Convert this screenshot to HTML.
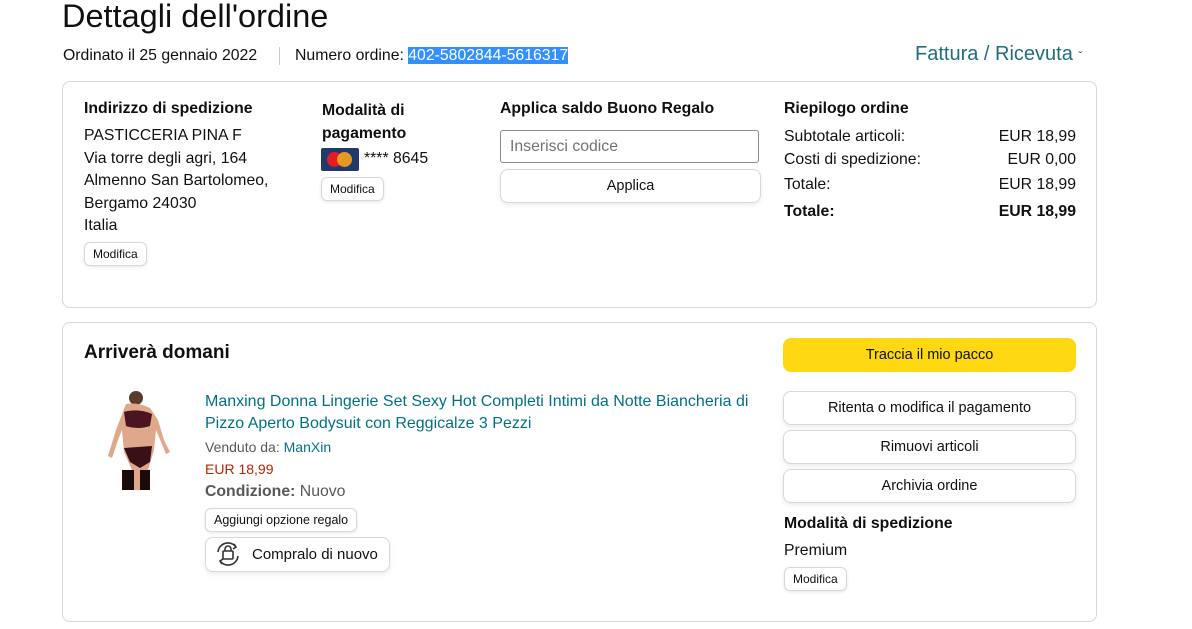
<!DOCTYPE html>
<html><head><meta charset="utf-8"><style>
*{margin:0;padding:0;box-sizing:border-box}
body{width:1192px;height:629px;background:#fff;font-family:"Liberation Sans",Arial,sans-serif;color:#0f1111;position:relative;overflow:hidden;font-size:15.8px}
.a{position:absolute;white-space:nowrap}
.b{font-weight:bold}
.box{position:absolute;border:1px solid #d5d9d9;border-radius:8px}
.btn{position:absolute;border:1px solid #d5d9d9;border-radius:8px;background:#fff;box-shadow:0 2px 5px rgba(213,217,217,.5);text-align:center;font-size:14.5px}
.sm{position:absolute;border:1px solid #d5d9d9;border-radius:6px;background:#fff;box-shadow:0 1px 3px rgba(213,217,217,.6);font-size:12px;padding:0 8px;line-height:22px;height:24px}
.link{color:#007185}
</style></head><body>
<div class="a" style="left:62px;top:-4px;font-size:32.5px;line-height:40px">Dettagli dell'ordine</div>
<div class="a" style="left:63px;top:46px;line-height:20px">Ordinato il 25 gennaio 2022</div>
<div class="a" style="left:279px;top:47px;width:1px;height:18px;background:#ccc"></div>
<div class="a" style="left:295px;top:46px;line-height:20px">Numero ordine: <span style="background:#3390ff;color:#fff">402-5802844-5616317</span></div>
<div class="a link" style="left:915px;top:42px;font-size:20px;line-height:24px;color:#1e6e7e">Fattura / Ricevuta <span style="font-size:12px;color:#555">&#711;</span></div>

<div class="box" style="left:62px;top:81px;width:1035px;height:227px"></div>
<div class="a b" style="left:84px;top:99px;line-height:20px">Indirizzo di spedizione</div>
<div class="a" style="left:84px;top:125px;line-height:22.5px">PASTICCERIA PINA F<br>Via torre degli agri, 164<br>Almenno San Bartolomeo,<br>Bergamo 24030<br>Italia</div>
<div class="sm" style="left:84px;top:242px">Modifica</div>

<div class="a b" style="left:322px;top:99px;line-height:23px">Modalità di<br>pagamento</div>
<div class="a" style="left:321px;top:148px;width:38px;height:23px;background:#1f3a6b;border-radius:2px"><div style="position:absolute;left:6px;top:4px;width:15px;height:15px;border-radius:50%;background:#e51c23"></div><div style="position:absolute;left:16px;top:4px;width:15px;height:15px;border-radius:50%;background:#f8a51b;opacity:.9"></div></div>
<div class="a" style="left:364px;top:149px;line-height:20px">**** 8645</div>
<div class="sm" style="left:321px;top:177px">Modifica</div>

<div class="a b" style="left:500px;top:99px;line-height:20px">Applica saldo Buono Regalo</div>
<div class="a" style="left:500px;top:130px;width:259px;height:33px;border:1px solid #888c8c;border-radius:3px;color:#6f7373;padding-left:9px;line-height:31px">Inserisci codice</div>
<div class="btn" style="left:500px;top:169px;width:261px;height:34px;line-height:32px">Applica</div>

<div class="a b" style="left:784px;top:99px;line-height:20px">Riepilogo ordine</div>
<div class="a" style="left:784px;top:125px;line-height:23px">Subtotale articoli:<br>Costi di spedizione:</div>
<div class="a" style="right:116px;top:125px;line-height:23px;text-align:right">EUR 18,99<br>EUR 0,00</div>
<div class="a" style="left:784px;top:175px;line-height:20px">Totale:</div>
<div class="a" style="right:116px;top:175px;line-height:20px">EUR 18,99</div>
<div class="a b" style="left:784px;top:202px;line-height:20px">Totale:</div>
<div class="a b" style="right:116px;top:202px;line-height:20px">EUR 18,99</div>

<div class="box" style="left:62px;top:322px;width:1035px;height:300px"></div>
<div class="a b" style="left:84px;top:341px;font-size:19px;line-height:24px">Arriverà domani</div>
<svg class="a" style="left:104px;top:390px" width="74" height="102" viewBox="0 0 74 102">
<circle cx="32" cy="8" r="7" fill="#5a3a2a"/>
<path d="M22 14 Q34 12 46 18 L54 30 L60 50 L66 62 L62 64 L52 40 L50 60 L44 80 L42 100 L30 100 L28 80 L20 62 L18 40 L14 50 L8 68 L4 66 L12 40 Z" fill="#e0a88a"/>
<path d="M20 22 Q34 18 48 24 L46 36 Q34 40 22 36 Z" fill="#4a1420"/>
<path d="M20 58 L48 56 L46 72 L36 78 L26 72 Z" fill="#3a1018"/>
<path d="M18 80 L30 80 L30 100 L18 100 Z M36 80 L46 80 L46 100 L36 100 Z" fill="#1a0a0a"/>
</svg>
<div class="a link" style="left:205px;top:391px;line-height:22px;font-size:16px">Manxing Donna Lingerie Set Sexy Hot Completi Intimi da Notte Biancheria di<br>Pizzo Aperto Bodysuit con Reggicalze 3 Pezzi</div>
<div class="a" style="left:205px;top:438px;font-size:14px;line-height:18px;color:#565959">Venduto da: <span class="link">ManXin</span></div>
<div class="a" style="left:205px;top:460px;font-size:14px;line-height:18px;color:#b12704">EUR 18,99</div>
<div class="a" style="left:205px;top:482px;line-height:20px;color:#565959"><b>Condizione:</b> Nuovo</div>
<div class="sm" style="left:205px;top:508px;font-size:12.5px">Aggiungi opzione regalo</div>
<div class="btn" style="left:205px;top:537px;width:185px;height:35px;line-height:33px;text-align:left;padding-left:46px;font-size:15px">Compralo di nuovo</div>
<svg class="a" style="left:214px;top:541px" width="28" height="26" viewBox="0 0 28 26" fill="none" stroke="#333" stroke-width="1.6"><path d="M4 11 A10 10 0 0 1 22 6"/><path d="M24 15 A10 10 0 0 1 6 20"/><path d="M20 3 L22 6 L19 8"/><path d="M8 23 L6 20 L9 18"/><rect x="9" y="10" width="10" height="8" rx="1"/><path d="M11 10 V8 a3 3 0 0 1 6 0 V10"/></svg>

<div class="a" style="left:783px;top:338px;width:293px;height:34px;background:#ffd814;border-radius:8px;text-align:center;line-height:34px;font-size:14.5px">Traccia il mio pacco</div>
<div class="btn" style="left:783px;top:391px;width:293px;height:34px;line-height:32px">Ritenta o modifica il pagamento</div>
<div class="btn" style="left:783px;top:430px;width:293px;height:34px;line-height:32px">Rimuovi articoli</div>
<div class="btn" style="left:783px;top:469px;width:293px;height:34px;line-height:32px">Archivia ordine</div>
<div class="a b" style="left:784px;top:514px;line-height:20px">Modalità di spedizione</div>
<div class="a" style="left:784px;top:541px;line-height:20px">Premium</div>
<div class="sm" style="left:784px;top:567px">Modifica</div>
</body></html>
